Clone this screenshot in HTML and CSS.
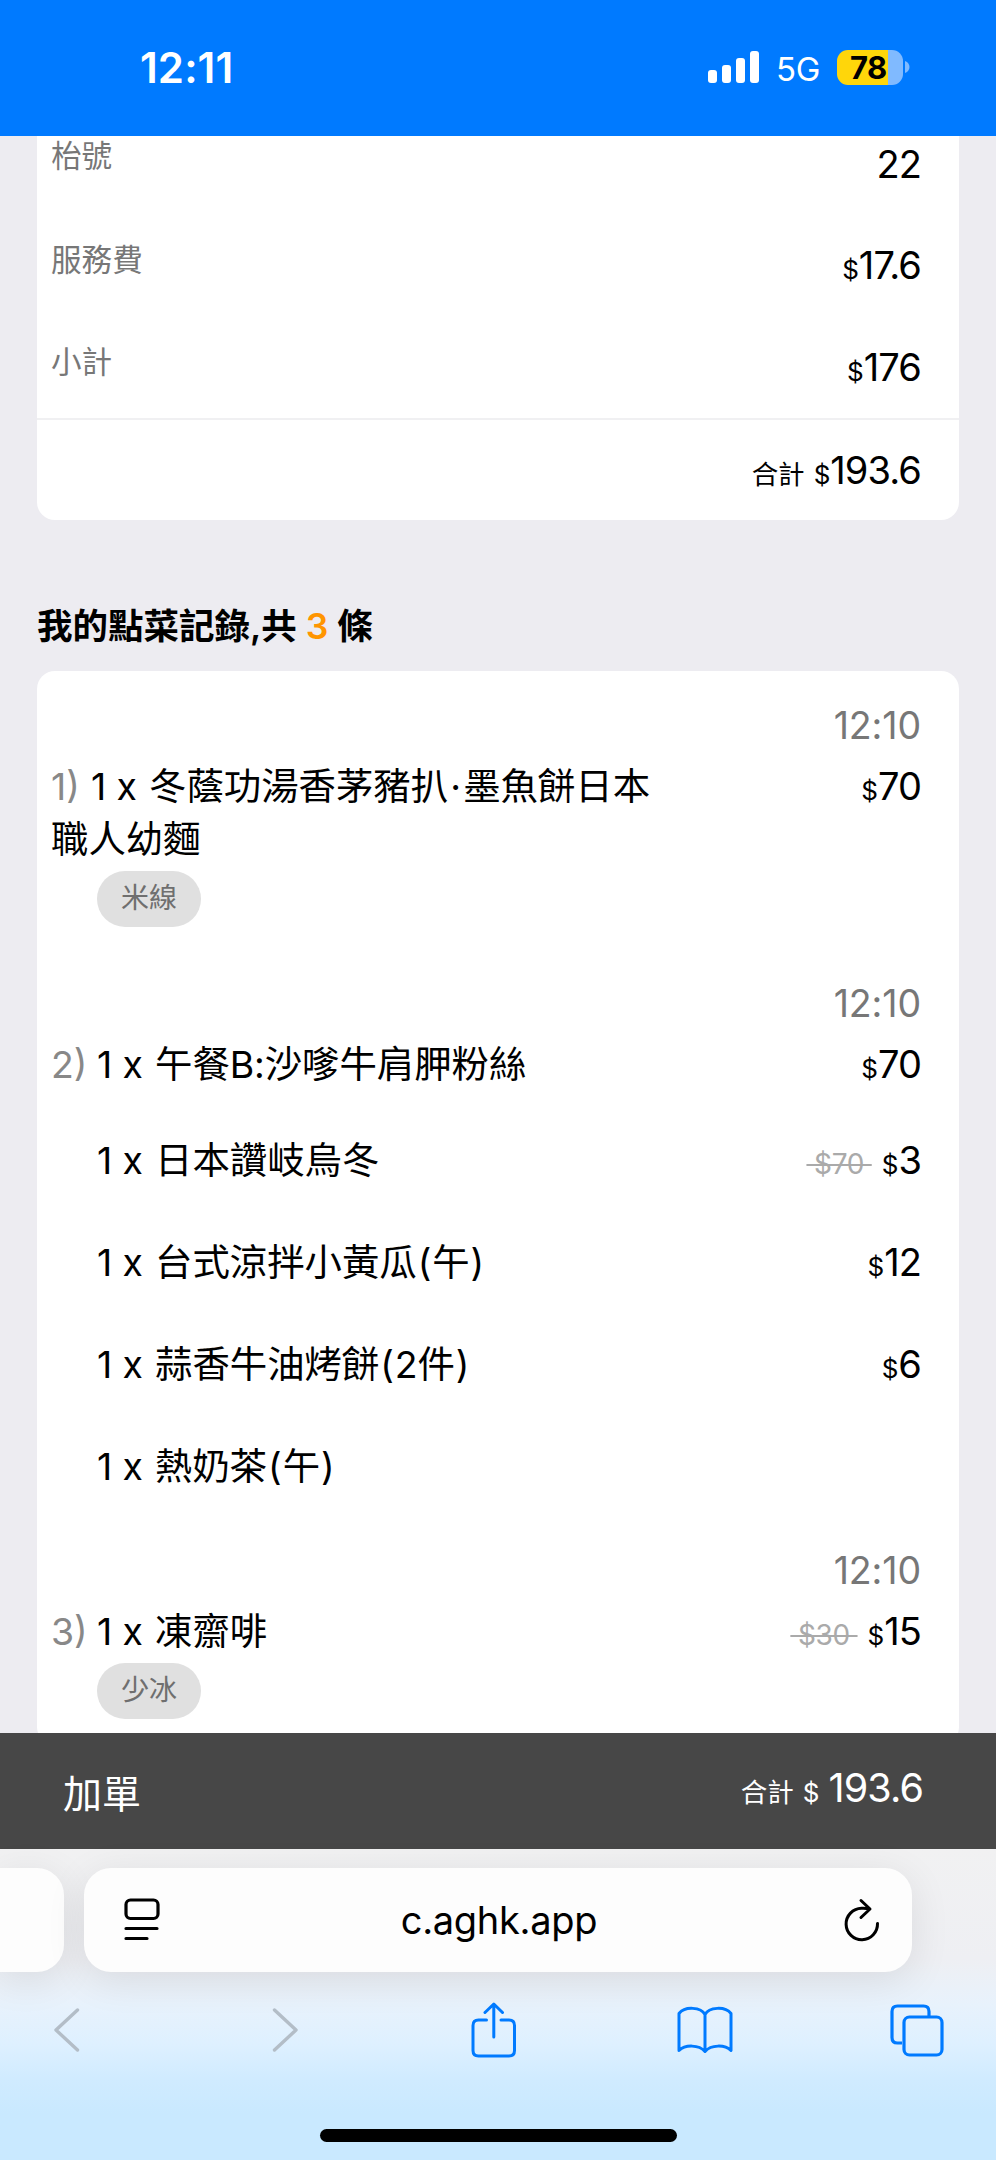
FILE: index.html
```html
<!DOCTYPE html>
<html lang="zh-HK">
<head>
<meta charset="utf-8">
<title>點菜記錄</title>
<link rel="stylesheet" href="styles.css">
</head>
<body>
<div class="phone">
  <header class="status">
    <span class="clock">12:11</span>
    <div class="indicators">
      <svg class="signal" width="52" height="32" viewBox="0 0 52 32" fill="#fff"><rect x="0" y="19" width="9" height="13" rx="3"/><rect x="14" y="14" width="9" height="18" rx="3"/><rect x="28" y="7" width="9" height="25" rx="3"/><rect x="42" y="0" width="9" height="32" rx="3"/></svg>
      <span class="network">5G</span>
      <div class="battery"><span class="level">78</span></div>
      <svg class="cap" width="5" height="12" viewBox="0 0 5 12"><path d="M0 0C6 2 6 10 0 12Z" fill="#80baff"/></svg>
    </div>
  </header>

  <main class="page">
    <section class="card summary">
      <div class="sum-row first"><span class="label">枱號</span><span class="amount">22</span></div>
      <div class="sum-row"><span class="label">服務費</span><span class="amount"><small>$</small>17.6</span></div>
      <div class="sum-row"><span class="label">小計</span><span class="amount"><small>$</small>176</span></div>
      <div class="sum-row total"><span class="amount"><span class="tag">合計</span><small>$</small>193.6</span></div>
    </section>

    <h2 class="heading">我的點菜記錄,共 <b class="count">3</b> 條</h2>

    <section class="card orders">
      <article class="order">
        <div class="time">12:10</div>
        <div class="line">
          <div class="name"><span class="idx one">1)</span><span class="qty">1 x</span>冬蔭功湯香茅豬扒<span class="dot">·</span>墨魚餅日本<br>職人幼麵</div>
          <span class="amount"><small>$</small>70</span>
        </div>
        <span class="pill">米線</span>
      </article>
      <article class="order second">
        <div class="time">12:10</div>
        <div class="line">
          <div class="name"><span class="idx">2)</span><span class="qty">1 x</span>午餐<span class="latin">B:</span>沙嗲牛肩胛粉絲</div>
          <span class="amount"><small>$</small>70</span>
        </div>
        <div class="subs">
          <div class="sub"><div class="name"><span class="qty">1 x</span>日本讚岐烏冬</div><span class="amount"><s>&nbsp;$70&nbsp;</s><small>$</small>3</span></div>
          <div class="sub"><div class="name"><span class="qty">1 x</span>台式涼拌小黃瓜<span class="paren">(</span>午<span class="paren">)</span></div><span class="amount"><small>$</small>12</span></div>
          <div class="sub"><div class="name"><span class="qty">1 x</span>蒜香牛油烤餅<span class="paren">(</span><span class="latin">2</span>件<span class="paren">)</span></div><span class="amount"><small>$</small>6</span></div>
          <div class="sub"><div class="name"><span class="qty">1 x</span>熱奶茶<span class="paren">(</span>午<span class="paren">)</span></div></div>
        </div>
      </article>
      <article class="order third">
        <div class="time">12:10</div>
        <div class="line">
          <div class="name"><span class="idx">3)</span><span class="qty">1 x</span>凍齋啡</div>
          <span class="amount"><s>&nbsp;$30&nbsp;</s><small>$</small>15</span>
        </div>
        <span class="pill">少冰</span>
      </article>
    </section>
  </main>

  <div class="cart">
    <span class="add">加單</span>
    <span class="amount"><span class="tag">合計</span><small>$</small>193.6</span>
  </div>

  <footer class="browser">
    <div class="tabs">
      <div class="tab prev"></div>
      <div class="tab current">
        <svg width="36" height="44" viewBox="0 0 36 44" fill="none" stroke="#000" stroke-width="3.2" stroke-linecap="round"><rect x="2" y="2" width="32" height="18.5" rx="4.5"/><path d="M2 30.500H33M2 40.500H23"/></svg>
        <span class="url">c.aghk.app</span>
        <svg width="36" height="44" viewBox="0 0 36 44" fill="none" stroke="#000" stroke-width="3" stroke-linecap="round" stroke-linejoin="round"><path d="M33.500 25.500A15.700 15.700 0 1 1 17.500 10.300C20.500 10.200 23 10.300 25.500 11M17 2.500L26 11L17 19.500"/></svg>
      </div>
    </div>
    <nav class="tools">
      <svg class="back" width="26" height="44" viewBox="0 0 26 44" fill="none" stroke="#b3bdc7" stroke-width="3.4" stroke-linecap="round" stroke-linejoin="round"><path d="M23.500 2L2 22L23.500 42"/></svg>
      <svg class="forward" width="26" height="44" viewBox="0 0 26 44" fill="none" stroke="#b3bdc7" stroke-width="3.4" stroke-linecap="round" stroke-linejoin="round"><path d="M2.500 2L24 22L2.500 42"/></svg>
      <svg class="share" width="46" height="56" viewBox="0 0 46 56" fill="none" stroke="#007aff" stroke-width="3" stroke-linecap="round" stroke-linejoin="round"><path d="M15.500 18H7.500Q2 18 2 23.500V48.500Q2 54 7.500 54H38Q43.500 54 43.500 48.500V23.500Q43.500 18 38 18H30M22.800 35V2.500M14 10.500L22.800 2L31.500 10.500"/></svg>
      <svg class="book" width="56" height="48" viewBox="0 0 56 48" fill="none" stroke="#007aff" stroke-width="3" stroke-linecap="round" stroke-linejoin="round"><path d="M28 8.500C24 1 8 0 2 7.500V44.500C8 38.500 22 38.500 28 45.500C34 38.500 48 38.500 54 44.500V7.500C48 0 32 1 28 8.500V45"/></svg>
      <svg class="windows" width="54" height="53" viewBox="0 0 54 53" fill="none" stroke="#007aff" stroke-width="3.2"><path d="M12 39H7.500Q2 39 2 33.500V7.500Q2 2 7.500 2H33.500Q39 2 39 7.500V12"/><rect x="14" y="13" width="38" height="38" rx="5.500"/></svg>
    </nav>
    <div class="home"></div>
  </footer>
</div>
</body>
</html>
```

FILE: styles.css
```css
* { box-sizing: border-box; }
body { margin: 0; font-family: Inter, "Noto Sans CJK TC", sans-serif; color: #000; }
svg { display: block; flex: none; }

.phone { width: 996px; height: 2160px; overflow: hidden; display: flex; flex-direction: column; background: #edecf1; }

.status { height: 136px; flex: none; background: #007aff; color: #fff; display: flex; justify-content: space-between; padding: 0 86px 0 140px; }
.clock { font-size: 42px; font-weight: 600; line-height: 136px; letter-spacing: 0.1px; }
.indicators { display: flex; align-items: center; height: 134px; }
.network { font-size: 33px; line-height: 40px; margin: 4px 17px 0 16px; letter-spacing: -0.3px; }
.battery { width: 66px; height: 35px; border-radius: 11px; background: linear-gradient(90deg, #ffd60a 78%, #80baff 78%); }
.level { display: block; color: #000; font-size: 31px; font-weight: 700; line-height: 35px; padding-left: 13px; letter-spacing: -0.6px; }
.cap { margin-left: 2px; }

.page { height: 1597px; flex: none; overflow: hidden; padding: 0 37px; }
.card { background: #fff; }
.amount { font-size: 38px; line-height: 52px; letter-spacing: -0.9px; white-space: nowrap; text-align: right; }
.amount small { font-size: 26px; letter-spacing: 0; }
.tag { font-size: 26.500px; letter-spacing: 0; margin-right: 9px; }
.amount s { font-size: 28px; color: #aaa; letter-spacing: -0.3px; margin-right: 10px; }

.summary { border-radius: 0 0 18px 18px; height: 384px; }
.sum-row { height: 102px; display: flex; align-items: center; justify-content: space-between; padding: 5px 38px 0 14px; }
.sum-row.first { height: 78px; padding-bottom: 27px; }
.sum-row.total { justify-content: flex-end; border-top: 2px solid #f0f0f2; }
.label { font-size: 30.600px; line-height: 40px; color: #777; margin-bottom: 16px; }

.heading { margin: 81px 0 18px; height: 52px; font-size: 35.500px; line-height: 52px; font-weight: 600; white-space: pre; }
.count { color: #ff9500; font-weight: 600; }

.orders { height: 1074px; border-radius: 18px; padding: 34px 38px 0 14px; }
.order { height: 278px; }
.order.second { height: 567px; }
.time { height: 42px; font-size: 37.500px; line-height: 42px; color: #777; text-align: right; letter-spacing: -0.1px; }
.line, .sub { display: flex; justify-content: space-between; align-items: flex-start; }
.line { padding-top: 13px; }
.name { font-size: 37.400px; line-height: 53px; white-space: nowrap; }
.idx { display: inline-block; width: 46px; color: #888; }
.idx.one { width: 40px; }
.qty { display: inline-block; width: 58px; letter-spacing: -0.1px; white-space: nowrap; }
.dot { display: inline-block; width: 15px; text-align: center; }
.paren { display: inline-block; width: 15.500px; text-align: center; }
.latin { letter-spacing: -0.2px; }
.pill { display: block; width: 104px; height: 56px; margin: 5px 0 0 46px; border-radius: 28px; background: #e0e0e0; color: #6f6f6f; font-size: 28px; line-height: 55px; text-align: center; }
.third .pill { margin-top: 1px; }
.subs { padding: 39px 0 0 46px; }
.sub { height: 102px; }

.cart { height: 116px; flex: none; background: #474747; color: #fff; display: flex; justify-content: space-between; align-items: center; padding: 0 73px 2px 63px; }
.add { font-size: 39px; line-height: 60px; margin-top: 8px; }
.cart .amount { font-size: 39.500px; }
.cart small { margin-right: 9px; }

.browser { height: 311px; flex: none; background: linear-gradient(#f1f1f2 0, #eeeff3 110px, #e8f2fc 155px, #def0ff 195px, #d0ebff 230px, #c9e9ff 265px); }
.tabs { display: flex; gap: 20px; height: 142px; padding-top: 19px; }
.tab { height: 104px; background: #fdfdfd; box-shadow: 0 8px 40px rgba(0, 0, 0, 0.09); }
.prev { width: 64px; border-radius: 0 27px 27px 0; }
.current { width: 828px; border-radius: 27px; display: flex; align-items: center; justify-content: space-between; padding: 0 32px 0 40px; }
.url { font-size: 38px; line-height: 50px; letter-spacing: -0.3px; margin-right: 6px; }
.tools { display: flex; align-items: center; padding-left: 54px; height: 78px; }
.forward { margin-left: 192px; }
.share { margin-left: 173px; }
.book { margin-left: 160px; }
.windows { margin-left: 157px; }
.home { width: 357px; height: 13px; border-radius: 7px; background: #000; margin: 60px auto 0; }
```
